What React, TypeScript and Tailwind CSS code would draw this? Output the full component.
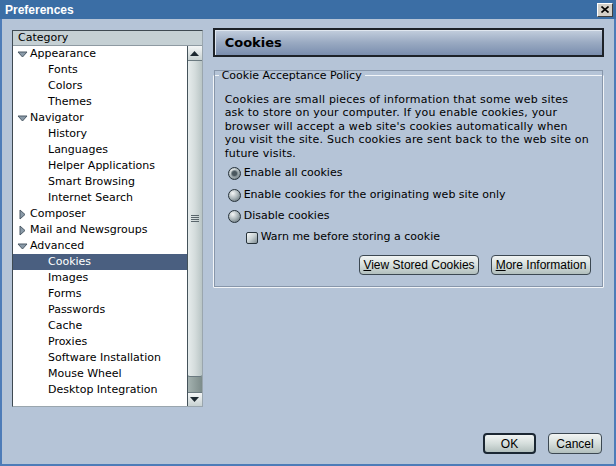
import React from 'react';

type Row = { label: string; level: 0 | 1; open?: boolean; selected?: boolean };

const rows: Row[] = [
  { label: 'Appearance', level: 0, open: true },
  { label: 'Fonts', level: 1 },
  { label: 'Colors', level: 1 },
  { label: 'Themes', level: 1 },
  { label: 'Navigator', level: 0, open: true },
  { label: 'History', level: 1 },
  { label: 'Languages', level: 1 },
  { label: 'Helper Applications', level: 1 },
  { label: 'Smart Browsing', level: 1 },
  { label: 'Internet Search', level: 1 },
  { label: 'Composer', level: 0, open: false },
  { label: 'Mail and Newsgroups', level: 0, open: false },
  { label: 'Advanced', level: 0, open: true },
  { label: 'Cookies', level: 1, selected: true },
  { label: 'Images', level: 1 },
  { label: 'Forms', level: 1 },
  { label: 'Passwords', level: 1 },
  { label: 'Cache', level: 1 },
  { label: 'Proxies', level: 1 },
  { label: 'Software Installation', level: 1 },
  { label: 'Mouse Wheel', level: 1 },
  { label: 'Desktop Integration', level: 1 },
];

const font = { fontFamily: '"DejaVu Sans", Verdana, sans-serif' };

// twisty arrows in the tree
const Twisty = ({ open }: { open?: boolean }) =>
  open ? (
    <svg width="11" height="11" viewBox="0 0 11 11">
      <path d="M1 3 H10 L5.5 8 Z" fill="#8a9aa8" stroke="#4c5a66" strokeWidth="1" />
    </svg>
  ) : (
    <svg width="11" height="11" viewBox="0 0 11 11">
      <path d="M3 1 V10 L8 5.5 Z" fill="#8a9aa8" stroke="#4c5a66" strokeWidth="1" />
    </svg>
  );

const Radio = ({ checked }: { checked?: boolean }) => (
  <span className="relative w-[13px] h-[13px] shrink-0 rounded-full border border-[#26323a] bg-[radial-gradient(circle_at_35%_30%,#f4f6f6,#a9b4b8_50%,#56636a)]">
    {checked && (
      <span className="absolute left-[3px] top-[3px] w-[5px] h-[5px] rounded-full bg-[#4a575e] shadow-[0_0_0_1px_#7d898e]" />
    )}
  </span>
);

const Button = ({ children, def, className }: { children: React.ReactNode; def?: boolean; className?: string }) => (
  <div
    className={`flex items-center justify-center rounded-[4px] bg-gradient-to-b from-[#f2f5f4] via-[#d5dedc] to-[#b2bfbd] text-black text-[12px] ${def ? 'border-2 border-[#1b2733]' : 'border border-[#3c4852]'} ${className ?? ''}`}
    style={{ fontFamily: '"Liberation Sans", Arial, sans-serif' }}
  >
    {children}
  </div>
);

export default function App() {
  return (
    <div
      className="w-[616px] h-[466px] flex flex-col bg-[#b5c4d7] border-x-2 border-b-2 border-[#4d7cb8] text-black"
      style={font}
    >
      {/* title bar */}
      <div className="h-[19px] shrink-0 -mx-[2px] bg-[#3b6ea5] flex items-center pl-[5px] pr-[3px]">
        <span
          className="text-white font-bold text-[12px] leading-none"
          style={{ fontFamily: '"Liberation Sans", Arial, sans-serif' }}
        >
          Preferences
        </span>
        <div className="ml-auto w-[16px] h-[14px] bg-[#d4d0c8] border border-t-white border-l-white border-r-[#404040] border-b-[#404040] flex items-center justify-center">
          <svg width="8" height="7" viewBox="0 0 8 7">
            <path d="M0.5 0.5 L7.5 6.5 M7.5 0.5 L0.5 6.5" stroke="black" strokeWidth="1.6" />
          </svg>
        </div>
      </div>

      <div className="flex-1 flex flex-col px-[10px] pt-[9px]">
        <div className="flex gap-[10px]">
          {/* category tree */}
          <div className="w-[191px] h-[377px] mt-[2px] flex flex-col border border-[#3f4a52] border-r-[#9aa6ae] border-b-[#9aa6ae] bg-white">
            <div className="h-[15px] shrink-0 bg-[#c5d0d4] border-b border-[#8e9aa2] text-[11px] leading-[14px] pl-[5px]">
              Category
            </div>
            <div className="flex-1 flex min-h-0">
              <div className="flex-1">
                {rows.map((r) => (
                  <div
                    key={r.label}
                    className={`h-[16px] flex items-center text-[11px] ${r.selected ? 'bg-[#4a5f80] text-white' : ''}`}
                  >
                    {r.level === 0 ? (
                      <>
                        <span className="w-[16px] flex justify-center pl-[2px]">
                          <Twisty open={r.open} />
                        </span>
                        <span className="pl-[1px]">{r.label}</span>
                      </>
                    ) : (
                      <span className="pl-[35px]">{r.label}</span>
                    )}
                  </div>
                ))}
              </div>
              {/* scrollbar */}
              <div className="w-[15px] flex flex-col bg-[#8c9c9a] border-l border-[#44525a]">
                <div className="h-[15px] shrink-0 flex items-center justify-center bg-gradient-to-b from-[#f4f6f6] to-[#c8d2d2] border-b border-[#6b7a80]">
                  <svg width="9" height="5" viewBox="0 0 9 5"><path d="M0 5 L4.5 0 L9 5 Z" fill="#1c2830" /></svg>
                </div>
                <div className="h-[316px] shrink-0 flex items-center justify-center bg-gradient-to-r from-[#e6ecec] via-[#d4dcdc] to-[#b9c5c5] border-b border-[#6b7a80] rounded-b-[2px]">
                  <svg width="8" height="7" viewBox="0 0 8 7">
                    <path d="M0 0.5 H8 M0 2.5 H8 M0 4.5 H8 M0 6.5 H8" stroke="#5a666c" strokeWidth="1" />
                  </svg>
                </div>
                <div className="flex-1 bg-gradient-to-r from-[#a4b2b0] to-[#7d8c8a]" />
                <div className="h-[14px] shrink-0 flex items-center justify-center bg-gradient-to-b from-[#f4f6f6] to-[#c8d2d2] border-t border-[#6b7a80]">
                  <svg width="9" height="5" viewBox="0 0 9 5"><path d="M0 0 L4.5 5 L9 0 Z" fill="#1c2830" /></svg>
                </div>
              </div>
            </div>
          </div>

          {/* right pane */}
          <div className="w-[392px] flex flex-col">
            <div className="h-[29px] flex items-center pl-[10px] border-2 border-[#1d2228] bg-gradient-to-b from-[#c4cfde] via-[#9aaac2] to-[#7a8eae] shadow-[inset_1px_1px_0_#dfe6ef]">
              <span className="font-bold text-[13px] text-black">Cookies</span>
            </div>

            <fieldset className="mt-[12px] border border-[#f2f5f8] outline outline-1 -outline-offset-2 outline-[#8796aa] rounded-[1px] pl-[11px] pr-[12px] pb-[12px] pt-[2px]">
              <legend className="-ml-[6px] px-[3px] text-[11px] leading-[13px]">Cookie Acceptance Policy</legend>
              <p className="w-[366px] text-[11px] leading-[13.4px] tracking-[0.2px] mt-[9px]">
                Cookies are small pieces of information that some web sites ask to store on your computer. If you enable cookies, your browser will accept a web site's cookies automatically when you visit the site. Such cookies are sent back to the web site on future visits.
              </p>
              <div className="mt-[3px] flex flex-col">
                <label className="h-[21px] flex items-center gap-[3px] pl-[3px] text-[11px]">
                  <Radio checked />
                  Enable all cookies
                </label>
                <label className="h-[22px] flex items-center gap-[3px] pl-[3px] text-[11px]">
                  <Radio />
                  Enable cookies for the originating web site only
                </label>
                <label className="h-[21px] flex items-center gap-[3px] pl-[3px] text-[11px]">
                  <Radio />
                  Disable cookies
                </label>
                <label className="h-[21px] flex items-center gap-[3px] pl-[21px] text-[11px]">
                  <span className="w-[12px] h-[12px] shrink-0 rounded-[2px] border border-[#26323a] bg-gradient-to-br from-[#f8fafa] via-[#c8d1d4] to-[#7f8c92]" />
                  Warn me before storing a cookie
                </label>
              </div>
              <div className="mt-[7px] flex justify-end gap-[12px]">
                <Button className="w-[120px] h-[20px]"><span><u>V</u>iew Stored Cookies</span></Button>
                <Button className="w-[100px] h-[20px]"><span><u>M</u>ore Information</span></Button>
              </div>
            </fieldset>
          </div>
        </div>

        <div className="mt-auto mb-[10px] flex justify-end gap-[12px] pr-[2px]">
          <Button def className="w-[53px] h-[21px]">OK</Button>
          <Button className="w-[54px] h-[21px]">Cancel</Button>
        </div>
      </div>
    </div>
  );
}
